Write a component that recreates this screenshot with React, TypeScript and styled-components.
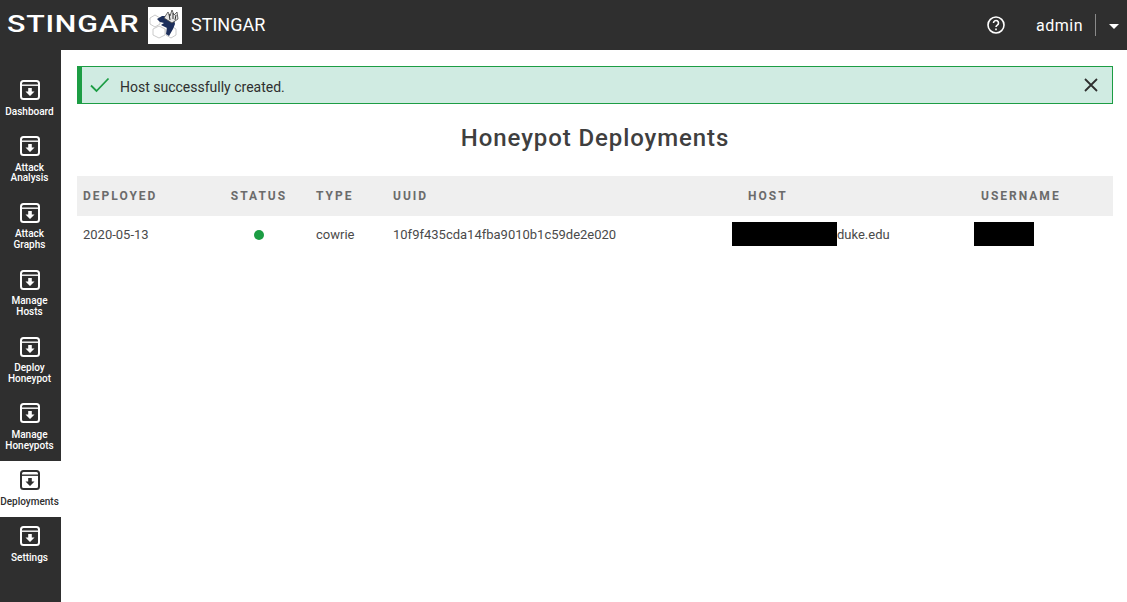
import React from "react";
import styled, { createGlobalStyle } from "styled-components";

const GlobalStyle = createGlobalStyle`
  html, body { margin: 0; padding: 0; height: 100%; background: #fff; }
  body { font-family: Roboto, "Liberation Sans", sans-serif; color: #3f3f3f; }
  #root { height: 100%; }
`;

const Page = styled.div`
  width: 1127px;
  height: 602px;
  display: flex;
  flex-direction: column;
  overflow: hidden;
`;

const TopBar = styled.header`
  height: 50px;
  flex: none;
  background: #2f2f2f;
  color: #fff;
  display: flex;
  align-items: center;
  padding-left: 7px;
`;

const Wordmark = styled.span`
  width: 132px;
  font-family: Roboto, sans-serif;
  font-size: 23px;
  line-height: 22px;
  font-weight: 500;
  letter-spacing: 0.6px;
  white-space: nowrap;
  transform: scaleX(1.32);
  transform-origin: left center;
`;

const LogoBox = styled.div`
  width: 34px;
  height: 37px;
  margin-left: 9px;
  background: #fff;
  display: flex;
  align-items: center;
  justify-content: center;
`;

const BrandName = styled.span`
  margin-left: 9px;
  font-size: 18px;
  line-height: 18px;
`;

const TopRight = styled.div`
  margin-left: auto;
  display: flex;
  align-items: center;
  height: 22px;
`;

const UserName = styled.span`
  margin-left: 31px;
  font-size: 16px;
  letter-spacing: 0.5px;
`;

const UserDivider = styled.span`
  width: 1px;
  height: 22px;
  background: #8a8a8a;
  margin-left: 12px;
`;

const Caret = styled.span`
  width: 0;
  height: 0;
  margin: 2px 8px 0 13px;
  border-left: 5px solid transparent;
  border-right: 5px solid transparent;
  border-top: 5px solid #fff;
`;

const Body = styled.div`
  flex: 1;
  display: flex;
  min-height: 0;
`;

const Sidebar = styled.nav`
  width: 61px;
  flex: none;
  background: #2f2f2f;
  padding-top: 21.3px;
  box-sizing: border-box;
`;

const NavItem = styled.a<{ $active?: boolean }>`
  display: flex;
  flex-direction: column;
  align-items: center;
  padding: 9px 2px 9.8px 0;
  background: ${(p) => (p.$active ? "#fff" : "transparent")};
  color: ${(p) => (p.$active ? "#2f2f2f" : "#fff")};
  font-size: 10px;
  font-weight: 500;
  line-height: 10.8px;
  text-align: center;
`;

const NavIcon = styled.svg`
  width: 20px;
  height: 20px;
  margin: 0 0 6.4px 1px;
`;

const Main = styled.main`
  flex: 1;
  min-width: 0;
  padding: 16px 14px 0 16px;
`;

const Alert = styled.div`
  height: 38px;
  box-sizing: border-box;
  display: flex;
  align-items: center;
  background: #d0ebe2;
  border: 1px solid #1c9d44;
  border-left-width: 5px;
  padding: 0 13px 0 8px;
  font-size: 14px;
  color: #2f2f2f;
`;

const AlertText = styled.span`
  margin-left: 10px;
  padding-top: 3px;
`;

const CloseIcon = styled.svg`
  margin-left: auto;
  width: 16px;
  height: 16px;
`;

const Title = styled.h1`
  margin: 19px 0 0;
  height: 30px;
  font-size: 24px;
  line-height: 30px;
  font-weight: 500;
  text-align: center;
  letter-spacing: 0.9px;
  color: #3f3f3f;
`;

const Table = styled.table`
  width: 1036px;
  margin-top: 23px;
  border-collapse: collapse;
  table-layout: fixed;
`;

const HeadCell = styled.th<{ $w: number; $indent?: number; $center?: boolean }>`
  width: ${(p) => p.$w}px;
  height: 40px;
  box-sizing: border-box;
  padding: 0 0 0 ${(p) => p.$indent ?? 6}px;
  background: #efefef;
  color: #6b6b6b;
  font-size: 12px;
  font-weight: 700;
  letter-spacing: 2px;
  text-align: ${(p) => (p.$center ? "center" : "left")};
`;

const Cell = styled.td<{ $center?: boolean; $indent?: number }>`
  height: 36px;
  padding: 0 0 0 ${(p) => (p.$center ? 0 : p.$indent ?? 6)}px;
  font-size: 13px;
  color: #4a4a4a;
  text-align: ${(p) => (p.$center ? "center" : "left")};
`;

const RedactedRow = styled.div`
  display: flex;
  align-items: center;
`;

const StatusDot = styled.span`
  display: inline-block;
  width: 10px;
  height: 10px;
  border-radius: 50%;
  background: #1c9d44;
  vertical-align: middle;
`;

const Redacted = styled.span<{ $w: number }>`
  display: block;
  width: ${(p) => p.$w}px;
  height: 24px;
  background: #000;
`;

const navItems = [
  ["Dashboard"],
  ["Attack", "Analysis"],
  ["Attack", "Graphs"],
  ["Manage", "Hosts"],
  ["Deploy", "Honeypot"],
  ["Manage", "Honeypots"],
  ["Deployments"],
  ["Settings"],
];

const ArchiveIcon = () => (
  <NavIcon viewBox="0 0 20 20">
    <rect x="1" y="1" width="18" height="18" rx="2.5" fill="none" stroke="currentColor" strokeWidth="2" />
    <line x1="1" y1="5.2" x2="19" y2="5.2" stroke="currentColor" strokeWidth="1.4" />
    <path d="M8.2 8h3.6v3.4h2.7L10 16l-4.5-4.6h2.7z" fill="currentColor" />
  </NavIcon>
);

const HornetLogo = () => (
  <svg width="32" height="32" viewBox="0 0 32 32">
    <g fill="#fff" stroke="#bdbdbd" strokeWidth="0.8">
      <path d="M1 9l5-3 5 3v6l-5 3-5-3z" />
      <path d="M4 20l6-3 6 3v6l-6 3-6-3z" />
      <path d="M17 20l5-3 5 3v6l-5 3-5-3z" />
    </g>
    <path d="M8 10l5-3h5l7 3 1 5-2 5-4 7-3-2 1-6-6-3 3-2-4-1z" fill="#1d2f5c" />
    <path d="M15 9l4-6 2 4 2-6 2 5 3-3 1 7-6 4z" fill="#e6e6e6" stroke="#444" strokeWidth="0.8" />
    <path d="M20 5l1 6M24 4l0 6M27 6l-1 5" stroke="#333" strokeWidth="1" />
  </svg>
);

export default function App() {
  return (
    <Page>
      <GlobalStyle />
      <TopBar>
        <Wordmark>STINGAR</Wordmark>
        <LogoBox>
          <HornetLogo />
        </LogoBox>
        <BrandName>STINGAR</BrandName>
        <TopRight>
          <svg width="18" height="18" viewBox="0 0 18 18" fill="none" stroke="#fff" strokeWidth="1.6">
            <circle cx="9" cy="9" r="8" />
            <path d="M6.5 7a2.5 2.5 0 1 1 3.8 2.1c-.9.6-1.3 1-1.3 2" />
            <line x1="9" y1="12.6" x2="9" y2="14.2" />
          </svg>
          <UserName>admin</UserName>
          <UserDivider />
          <Caret />
        </TopRight>
      </TopBar>
      <Body>
        <Sidebar>
          {navItems.map((lines) => (
            <NavItem key={lines.join(" ")} $active={lines[0] === "Deployments"}>
              <ArchiveIcon />
              {lines.map((l) => (
                <span key={l}>{l}</span>
              ))}
            </NavItem>
          ))}
        </Sidebar>
        <Main>
          <Alert>
            <svg width="20" height="16" viewBox="0 0 20 16" fill="none" stroke="#1c9d44" strokeWidth="1.8">
              <path d="M1 8.5l5.5 5.5L18.5 1.5" />
            </svg>
            <AlertText>Host successfully created.</AlertText>
            <CloseIcon viewBox="0 0 16 16" fill="none" stroke="#2f2f2f" strokeWidth="1.8">
              <path d="M2 2l12 12M14 2L2 14" />
            </CloseIcon>
          </Alert>
          <Title>Honeypot Deployments</Title>
          <Table>
            <thead>
              <tr>
                <HeadCell $w={134}>DEPLOYED</HeadCell>
                <HeadCell $w={96} $center $indent={0}>STATUS</HeadCell>
                <HeadCell $w={77} $indent={9}>TYPE</HeadCell>
                <HeadCell $w={342} $indent={9}>UUID</HeadCell>
                <HeadCell $w={242} $indent={22}>HOST</HeadCell>
                <HeadCell $w={145} $indent={13}>USERNAME</HeadCell>
              </tr>
            </thead>
            <tbody>
              <tr>
                <Cell>2020-05-13</Cell>
                <Cell $center>
                  <StatusDot />
                </Cell>
                <Cell $indent={9}>cowrie</Cell>
                <Cell $indent={9}>10f9f435cda14fba9010b1c59de2e020</Cell>
                <Cell>
                  <RedactedRow>
                    <Redacted $w={105} />
                    duke.edu
                  </RedactedRow>
                </Cell>
                <Cell>
                  <RedactedRow>
                    <Redacted $w={60} />
                  </RedactedRow>
                </Cell>
              </tr>
            </tbody>
          </Table>
        </Main>
      </Body>
    </Page>
  );
}
